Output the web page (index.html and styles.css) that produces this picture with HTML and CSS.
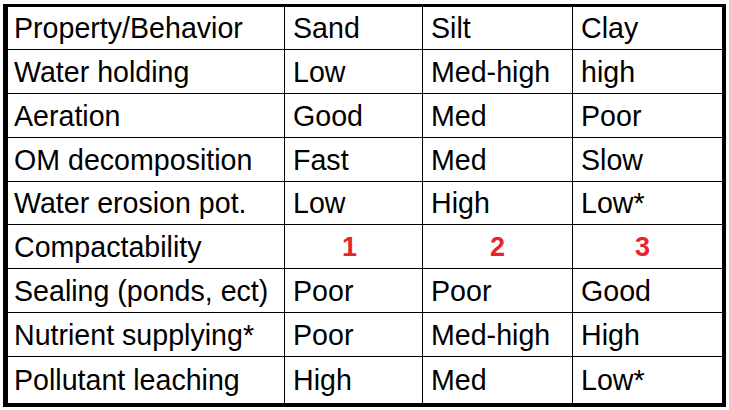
FILE: index.html
```html
<!DOCTYPE html>
<html>
<head>
<meta charset="utf-8">
<link rel="stylesheet" href="styles.css">
</head>
<body>
<div class="frame">
  <div class="grid">
    <div class="c first">Property/Behavior</div><div class="c">Sand</div><div class="c">Silt</div><div class="c last">Clay</div>
    <div class="c first">Water holding</div><div class="c">Low</div><div class="c">Med-high</div><div class="c last">high</div>
    <div class="c first">Aeration</div><div class="c">Good</div><div class="c">Med</div><div class="c last">Poor</div>
    <div class="c first">OM decomposition</div><div class="c">Fast</div><div class="c">Med</div><div class="c last">Slow</div>
    <div class="c first">Water erosion pot.</div><div class="c">Low</div><div class="c">High</div><div class="c last">Low*</div>
    <div class="c first">Compactability</div><div class="c num n1">1</div><div class="c num">2</div><div class="c num last n3">3</div>
    <div class="c first">Sealing (ponds, ect)</div><div class="c">Poor</div><div class="c">Poor</div><div class="c last">Good</div>
    <div class="c first">Nutrient supplying*</div><div class="c">Poor</div><div class="c">Med-high</div><div class="c last">High</div>
    <div class="c first bottom">Pollutant leaching</div><div class="c bottom">High</div><div class="c bottom">Med</div><div class="c last bottom">Low*</div>
  </div>
</div>
</body>
</html>
```
FILE: styles.css
```css
html, body {
  margin: 0;
  padding: 0;
  background: #ffffff;
}
body {
  font-family: "Liberation Sans", Arial, sans-serif;
  color: #000000;
}
.frame {
  display: inline-block;
  margin: 4px 0 0 3px;
  border-style: solid;
  border-color: #000000;
  border-width: 3px 4px 4px 5px;
}
.grid {
  display: grid;
  grid-template-columns: 277px 138px 150px 149px;
  grid-template-rows: 43px 44px 44px 44px 43px 44px 44px 44px 46px;
}
.c {
  box-sizing: border-box;
  border-right: 1px solid #000000;
  border-bottom: 1px solid #000000;
  display: flex;
  align-items: center;
  padding-left: 8px;
  font-size: 28.6px;
  line-height: 32px;
  white-space: nowrap;
}
.c.first {
  padding-left: 6px;
}
.c.last {
  border-right: none;
}
.c.bottom {
  border-bottom: none;
}
.num {
  justify-content: center;
  padding-left: 0;
  color: #e8232c;
  font-weight: bold;
  font-size: 27px;
}
.n1 {
  padding-right: 8px;
}
.n3 {
  padding-right: 10px;
}
```
